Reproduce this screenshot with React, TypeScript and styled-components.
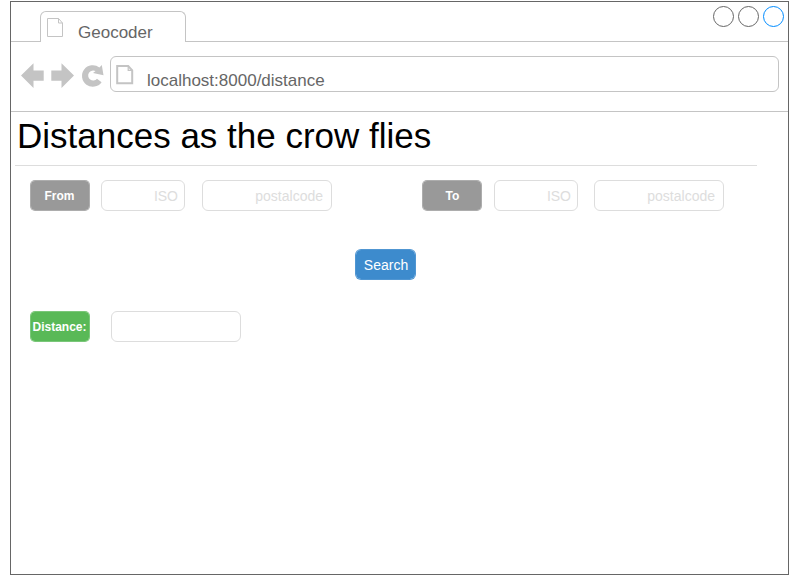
import React from "react";
import styled, { createGlobalStyle } from "styled-components";

const GlobalStyle = createGlobalStyle`
  * { box-sizing: border-box; }
  body { margin: 0; background: #fff; overflow: hidden; font-family: "Liberation Sans", Arial, sans-serif; }
`;

const BrowserWindow = styled.main`
  width: 779px;
  height: 574px;
  margin: 1px 0 0 10px;
  border: 1px solid #666;
  background: #fff;
`;

const TabStrip = styled.header`
  display: flex;
  justify-content: space-between;
  height: 40px;
  padding: 0 4px 0 29px;
  border-bottom: 1px solid #c4c4c4;
`;

const Tab = styled.div`
  display: flex;
  width: 146px;
  height: 31px;
  margin-top: 9px;
  padding: 6px 0 0 6px;
  border: 1px solid #c4c4c4;
  border-bottom: 0;
  border-radius: 6px 6px 0 0;
  background: #fff;
`;

const TabTitle = styled.span`
  margin: 5px 0 0 14px;
  font-size: 17px;
  line-height: 20px;
  color: #666;
`;

const WindowControls = styled.div`
  display: flex;
  gap: 4px;
  padding-top: 4px;
`;

const ControlDot = styled.span<{ $color: string }>`
  width: 21px;
  height: 21px;
  border: 1px solid ${(p) => p.$color};
  border-radius: 50%;
`;

const Toolbar = styled.nav`
  display: flex;
  height: 70px;
  padding: 14px 9px 0 10px;
  border-bottom: 1px solid #c4c4c4;
`;

const NavIcons = styled.svg`
  flex: none;
  width: 84px;
  height: 36px;
  margin-right: 5px;
  fill: #c4c4c4;
`;

const AddressBar = styled.div`
  display: flex;
  flex: 1;
  height: 36px;
  padding: 7px 0 0 4px;
  border: 1px solid #c4c4c4;
  border-radius: 6px;
`;

const Address = styled.span`
  margin: 7px 0 0 12px;
  font-size: 17px;
  line-height: 20px;
  color: #666;
`;

const PageSvg = styled.svg`
  flex: none;
  display: block;
  fill: none;
  stroke: #c4c4c4;
`;

const Title = styled.h1`
  width: 742px;
  height: 54px;
  margin: 0 0 0 4px;
  padding: 3px 0 0 2px;
  border-bottom: 1px solid #ddd;
  font-size: 35px;
  font-weight: 400;
  line-height: 42px;
  white-space: nowrap;
  color: #000;
`;

const Places = styled.div`
  display: flex;
  padding: 14px 0 0 19px;
`;

const Place = styled.div`
  display: flex;
  flex: none;
  &:first-child { margin-right: 90px; }
`;

const Tag = styled.span<{ $color: string; $indent?: number }>`
  flex: none;
  width: 60px;
  height: 31px;
  border: 1px solid ${(p) => p.$color}cc;
  border-radius: 5px;
  background: ${(p) => p.$color};
  background-clip: padding-box;
  font-size: 12px;
  font-weight: 700;
  line-height: 31px;
  text-align: center;
  text-indent: ${(p) => p.$indent ?? -1}px;
  white-space: nowrap;
  color: #fff;
`;

const Field = styled.input<{ $width: number; $gap: number; $inset?: number }>`
  width: ${(p) => p.$width}px;
  height: 31px;
  margin: 0 0 0 ${(p) => p.$gap}px;
  padding: 1px ${(p) => p.$inset ?? 8}px 0 0;
  border: 1px solid #ddd;
  border-radius: 6px;
  outline: 0;
  background: #fff;
  font: 14px "Liberation Sans", Arial, sans-serif;
  text-align: right;
  &::placeholder { color: #ddd; opacity: 1; }
`;

const SearchButton = styled.button`
  display: block;
  width: 61px;
  height: 31px;
  margin: 38px 0 0 344px;
  padding: 1px 0 0 1px;
  border: 1px solid #3d8bcde6;
  border-radius: 6px;
  background: #3d8bcd;
  background-clip: padding-box;
  font: 14px "Liberation Sans", Arial, sans-serif;
  color: #fff;
`;

const Result = styled.div`
  display: flex;
  padding: 31px 0 0 19px;
`;

function TabPageIcon() {
  return (
    <PageSvg width="17" height="20" viewBox="0 0 17 20">
      <path d="M.5.5H11.5L15.5 5V18.5H.5ZM11.5.5V5H15.5" />
    </PageSvg>
  );
}

function AddressPageIcon() {
  return (
    <PageSvg width="20" height="22" viewBox="0 0 20 22" strokeWidth="2">
      <path d="M2.2 2H13.2L17.2 6.3V19.3H2.2Z" />
      <path d="M13.2 2V6.3H17.2" strokeWidth="1.2" />
    </PageSvg>
  );
}

export default function App() {
  return (
    <>
      <GlobalStyle />
      <BrowserWindow>
        <TabStrip>
          <Tab>
            <TabPageIcon />
            <TabTitle>Geocoder</TabTitle>
          </Tab>
          <WindowControls>
            <ControlDot $color="#666" />
            <ControlDot $color="#666" />
            <ControlDot $color="#008cff" />
          </WindowControls>
        </TabStrip>
        <Toolbar>
          <NavIcons viewBox="0 0 84 36">
            <path d="M0 19.5L12.5 7.3V14.5H22.7V24.8H12.5V32Z" />
            <path d="M53 19.5L40.5 7.3V14.5H30.3V24.8H40.5V32Z" />
            <path d="M78.4 11.4L80.8 9L82.5 19.2L72 17L74.6 15.1A5 5 0 1 0 76 22.7L80.6 26.2A10.8 10.8 0 1 1 78.4 11.4Z" />
          </NavIcons>
          <AddressBar>
            <AddressPageIcon />
            <Address>localhost:8000/distance</Address>
          </AddressBar>
        </Toolbar>
        <Title>Distances as the crow flies</Title>
        <Places>
          <Place>
            <Tag $color="#999999">From</Tag>
            <Field $width={84} $gap={11} $inset={6} placeholder="ISO" />
            <Field $width={130} $gap={17} placeholder="postalcode" />
          </Place>
          <Place>
            <Tag $color="#999999" $indent={1}>To</Tag>
            <Field $width={84} $gap={12} $inset={6} placeholder="ISO" />
            <Field $width={130} $gap={16} placeholder="postalcode" />
          </Place>
        </Places>
        <SearchButton>Search</SearchButton>
        <Result>
          <Tag $color="#59b957">Distance:</Tag>
          <Field $width={130} $gap={21} aria-label="Distance" />
        </Result>
      </BrowserWindow>
    </>
  );
}
